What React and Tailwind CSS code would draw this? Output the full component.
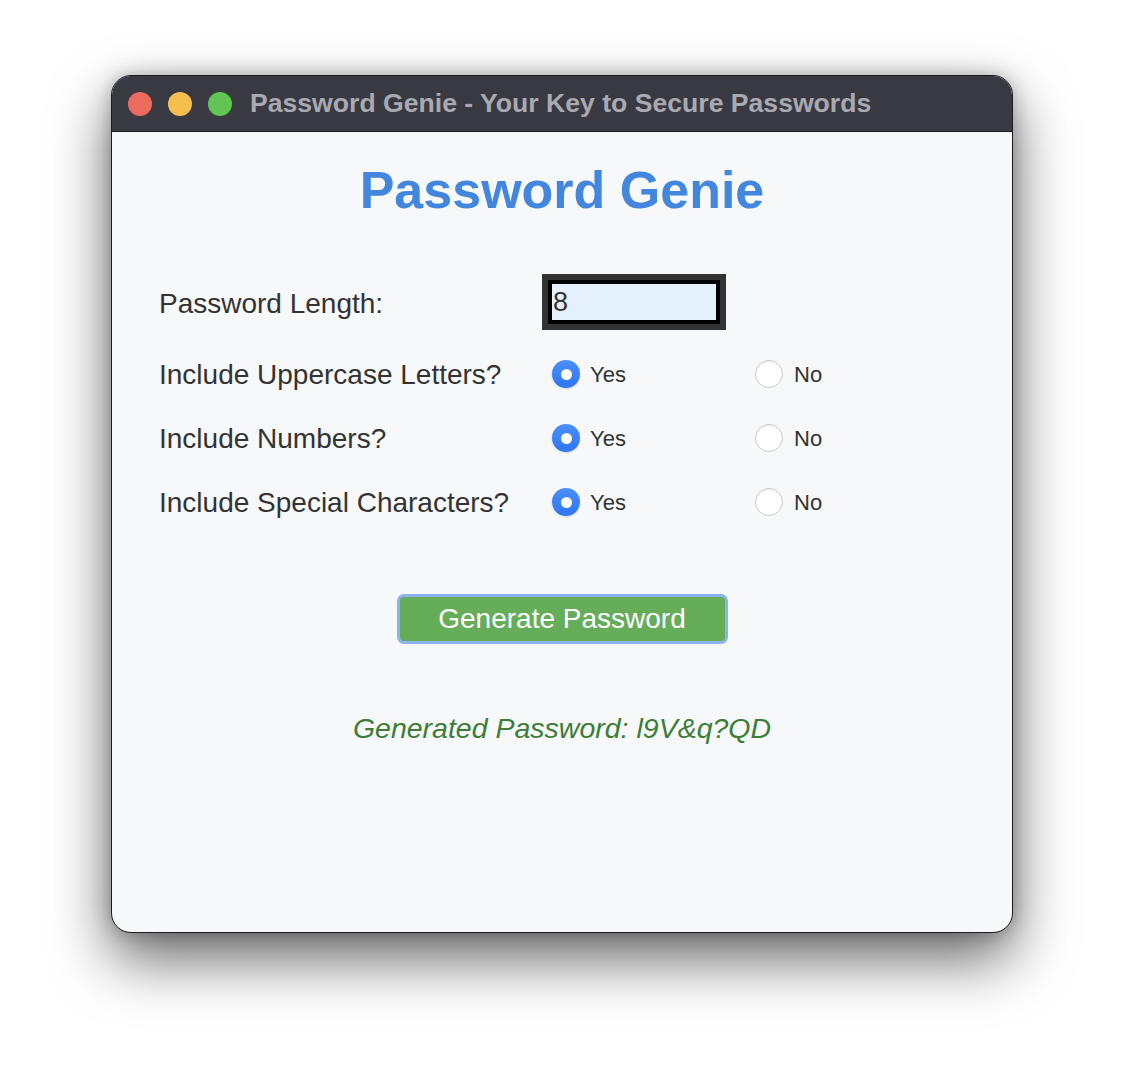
import React from "react";

function Radio({ checked }) {
  if (checked) {
    return (
      <span className="w-[28px] h-[28px] rounded-full bg-gradient-to-b from-[#4a90f8] to-[#2f74f1] flex items-center justify-center shadow-[0_1px_2px_rgba(0,0,0,0.15)] shrink-0">
        <span className="w-[11px] h-[11px] rounded-full bg-white" />
      </span>
    );
  }
  return (
    <span className="w-[28px] h-[28px] rounded-full bg-white border border-[#c9c9c9] shadow-[inset_0_1px_1px_rgba(0,0,0,0.05)] shrink-0" />
  );
}

function OptionRow({ label }) {
  return (
    <div className="flex items-center h-[32px]">
      <div className="w-[383px] text-[28px] leading-[32px] text-[#333333] pt-[2px]">{label}</div>
      <div className="flex items-center pl-[10px]">
        <div className="w-[203px] flex items-center gap-[10px]">
          <Radio checked />
          <span className="text-[22px] text-[#333333]">Yes</span>
        </div>
        <div className="flex items-center gap-[11px]">
          <Radio checked={false} />
          <span className="text-[22px] text-[#333333]">No</span>
        </div>
      </div>
    </div>
  );
}

export default function App() {
  return (
    <div
      className="w-[1124px] h-[1080px] bg-white flex items-start pt-[75px] pl-[111px]"
      style={{ fontFamily: '"Liberation Sans", Arial, Helvetica, sans-serif' }}
    >
      <div className="w-[902px] h-[858px] rounded-[20px] border border-[#1c1c1e] overflow-hidden flex flex-col bg-[#f7f8f9] shadow-[0_26px_60px_rgba(0,0,0,0.6),0_0_18px_rgba(0,0,0,0.25)]">
        {/* Title bar */}
        <div className="h-[56px] bg-[#393942] flex items-center border-b border-[#1c1c1e] shrink-0">
          <div className="flex items-center gap-[16px] pl-[16px]">
            <span className="w-[24px] h-[24px] rounded-full bg-[#ed6a5e]" />
            <span className="w-[24px] h-[24px] rounded-full bg-[#f5bf4f]" />
            <span className="w-[24px] h-[24px] rounded-full bg-[#61c554]" />
          </div>
          <div className="pl-[18px] text-[26.6px] font-bold text-[#a9a9b2] leading-none">
            Password Genie - Your Key to Secure Passwords
          </div>
        </div>

        {/* Content */}
        <div className="flex flex-col">
          <h1 className="mt-[28px] text-center text-[52px] leading-[60px] font-bold text-[#4286de]">
            Password Genie
          </h1>

          <div className="mt-[54px] pl-[47px] flex flex-col">
            <div className="flex items-center h-[56px]">
              <div className="w-[383px] text-[28px] leading-[32px] text-[#333333] pt-[3px]">Password Length:</div>
              <div className="w-[184px] h-[56px] border-[6px] border-[#333333]">
                <div className="w-full h-full border-[4px] border-black bg-[#e4f0fb] flex items-center pl-[1px] text-[27px] text-[#333333]">
                  8
                </div>
              </div>
            </div>
            <div className="mt-[28px] flex flex-col gap-[32px]">
              <OptionRow label="Include Uppercase Letters?" />
              <OptionRow label="Include Numbers?" />
              <OptionRow label="Include Special Characters?" />
            </div>
          </div>

          <div className="mt-[76px] flex justify-center">
            <button className="w-[331px] h-[50px] rounded-[7px] border-[3px] border-[#8bb3ee] bg-[#66ad5a] text-white text-[28px] leading-none flex items-center justify-center">
              Generate Password
            </button>
          </div>

          <div className="mt-[68px] text-center italic text-[28.5px] leading-[32px] text-[#3e7d38]">
            Generated Password: l9V&amp;q?QD
          </div>
        </div>
      </div>
    </div>
  );
}
